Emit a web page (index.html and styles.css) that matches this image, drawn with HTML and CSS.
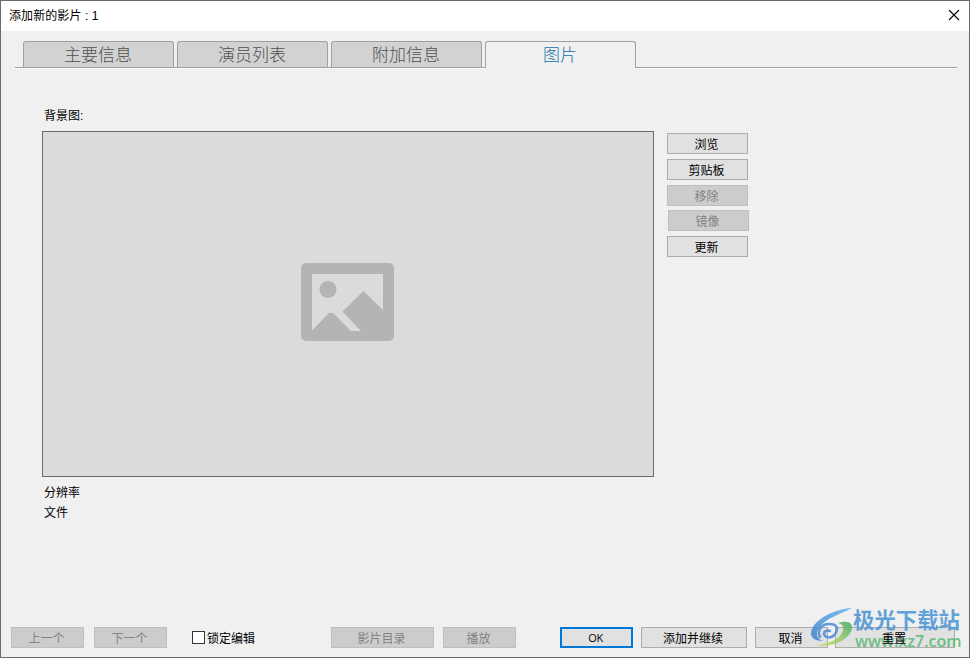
FILE: index.html
```html
<!DOCTYPE html>
<html lang="zh-CN">
<head>
<meta charset="utf-8">
<title>添加新的影片 : 1</title>
<link rel="stylesheet" href="styles.css">
</head>
<body>
<div class="window">
  <header class="titlebar">
    <span class="title">添加新的影片 : 1</span>
    <svg class="close" width="12" height="12" viewBox="0 0 12 12"><path d="M1 1L11 11M11 1L1 11" stroke="#000" stroke-width="1.1" fill="none"/></svg>
  </header>
  <nav class="tabs">
    <div class="tab">主要信息</div>
    <div class="tab">演员列表</div>
    <div class="tab">附加信息</div>
    <div class="tab active">图片</div>
  </nav>
  <main class="content">
    <div class="label">背景图:</div>
    <div class="row">
      <div class="preview">
        <svg width="93" height="78" viewBox="0 0 93 78">
          <rect width="93" height="78" rx="5" fill="#b4b4b4"/>
          <path d="M11 11H82V47L62.500 28L41.500 48.500L60 68H50L32 50H28L11 67.500Z" fill="#dbdbdb"/>
          <circle cx="27" cy="26.500" r="8.500" fill="#b4b4b4"/>
        </svg>
      </div>
      <div class="side">
        <button class="btn">浏览</button>
        <button class="btn">剪贴板</button>
        <button class="btn off">移除</button>
        <button class="btn off shifted">镜像</button>
        <button class="btn">更新</button>
      </div>
    </div>
    <div class="meta"><div>分辨率</div><div>文件</div></div>
  </main>
  <footer class="footer">
    <button class="btn off prev">上一个</button>
    <button class="btn off next">下一个</button>
    <label class="lock"><span class="box"></span>锁定编辑</label>
    <button class="btn off folder">影片目录</button>
    <button class="btn off play">播放</button>
    <button class="btn ok">OK</button>
    <button class="btn more">添加并继续</button>
    <button class="btn cancel">取消</button>
    <button class="btn reset"><span class="front">重置</span></button>
  </footer>
  <div class="watermark">
    <svg class="mark" width="46" height="42" viewBox="0 0 46 42">
      <defs>
        <linearGradient id="blue" x1="0" y1="1" x2="1" y2="0"><stop offset="0" stop-color="#3f7fce"/><stop offset="1" stop-color="#65b7ee"/></linearGradient>
        <linearGradient id="green" x1="0" y1="1" x2="1" y2="0"><stop offset="0" stop-color="#d8dc55"/><stop offset=".5" stop-color="#8fcb6a"/><stop offset="1" stop-color="#43ab68"/></linearGradient>
      </defs>
      <path d="M42 1C25 2 7 11 2 22C-1 29 3 34 13 34C6 31 5 26 10 20C16 11 31 7 42 1Z" fill="url(#blue)"/>
      <path d="M28 16C38 13 43 16 42 22C39 33 23 40 6 39C20 36 30 32 33 24C34 19 32 17 28 16Z" fill="url(#green)"/>
      <path d="M10 30C6 23 13 16 20 17C27 17 29 22 25 27C22 32 15 31 14 27C14 24 17 23 20 24" fill="none" stroke="#4a8bd2" stroke-width="2.500" stroke-linecap="round"/>
    </svg>
    <div class="words"><div class="site">极光下载站</div><div class="url">www.xz7.com</div></div>
  </div>
</div>
</body>
</html>
```

FILE: styles.css
```css
* { box-sizing: border-box; }
body { margin: 0; font: 12px/16px "Liberation Sans", "Noto Sans CJK SC", sans-serif; color: #000; }
.window { position: relative; width: 970px; height: 658px; border: 1px solid #6b6b6b; background: #f0f0f0; display: flex; flex-direction: column; overflow: hidden; }
.titlebar { height: 30px; flex: none; background: #fff; display: flex; justify-content: space-between; align-items: center; padding: 0 9px 0 8px; }
.title { letter-spacing: .08px; }
.close { margin-top: -2px; }
.tabs { display: flex; gap: 3px; flex: none; height: 27px; margin: 10px 12px 0 14px; padding-left: 8px; border-bottom: 1px solid #a0a0a0; box-shadow: 0 1px #fff; }
.tab { width: 151px; height: 26px; border: 1px solid #a0a0a0; border-bottom: 0; border-radius: 3px 3px 0 0; background: #d2d2d2; color: #505050; font-size: 17px; line-height: 28px; text-align: center; font-weight: 300; padding-right: 1px; }
.tab.active { height: 27px; background: #f0f0f0; color: #1670ac; box-shadow: 0 1px #f0f0f0; }
.content { flex: 1; padding: 40px 0 0 41px; }
.label { height: 16px; padding-left: 2px; margin-bottom: 7px; }
.row { display: flex; gap: 13px; }
.preview { width: 612px; height: 346px; border: 1px solid #6b6b6b; background: #dbdbdb; display: flex; align-items: center; justify-content: center; padding: 0 1px 4px 0; }
.side { display: flex; flex-direction: column; gap: 5px; padding-top: 2px; }
.btn { display: block; flex: none; width: 81px; height: 21px; margin: 0; padding: 1px 2px 0 0; border: 1px solid #adadad; border-radius: 0; background: #e1e1e1; color: #000; font: inherit; line-height: 20px; text-align: center; }
.off { background: #ccc; border-color: #bfbfbf; color: #838383; }
.shifted { margin: -1px 0 0 1px; }
.meta { padding: 6px 0 0 2px; line-height: 20px; }
.footer { display: flex; flex: none; height: 21px; margin: 0 0 9px 10px; }
.prev, .next, .play, .ok, .cancel { width: 73px; }
.next { margin-left: 10px; }
.lock { display: flex; align-items: center; width: 139px; margin-left: 25px; gap: 2px; padding-top: 2px; }
.box { width: 13px; height: 13px; border: 1px solid #333; background: #fff; margin-top: -2px; }
.folder { width: 103px; }
.play { margin-left: 9px; }
.ok { margin-left: 44px; padding-top: 0; border: 2px solid #0078d7; line-height: 17px; font-family: "Open Sans", sans-serif; font-size: 11px; letter-spacing: -.4px; }
.more { width: 106px; margin-left: 8px; }
.cancel { margin-left: 8px; }
.reset { width: 120px; margin-left: 7px; }
.front { position: relative; z-index: 2; }
.watermark { position: absolute; z-index: 1; left: 809px; top: 606px; display: flex; opacity: .85; pointer-events: none; }
.words { margin-left: -3px; white-space: nowrap; }
.site { font-family: "Noto Sans CJK SC", sans-serif; font-weight: 700; font-size: 21.400px; line-height: 24px; color: #4a93d4; }
.url { font-family: "Open Sans", sans-serif; font-size: 16px; font-weight: 600; line-height: 20px; color: #58b873; padding-left: 2px; }
```
